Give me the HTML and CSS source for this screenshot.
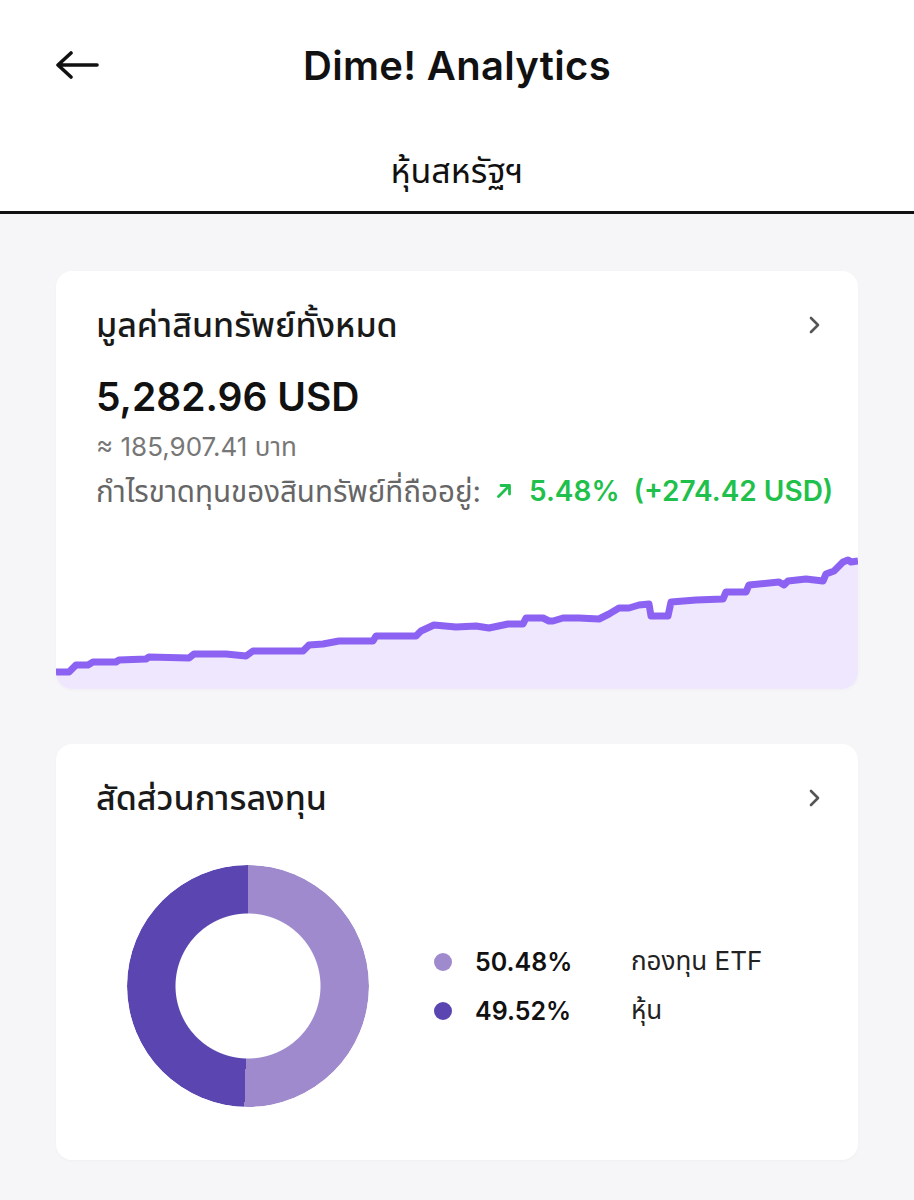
FILE: index.html
```html
<!DOCTYPE html>
<html lang="th">

<head>
    <meta charset="UTF-8">
    <meta name="viewport" content="width=device-width, initial-scale=1.0">
    <title>Dime! Analytics</title>
    <link rel="stylesheet" href="styles.css">
</head>

<body>
    <header class="topBar">
        <div class="titleRow">
            <a class="backBtn" href="#">
                <svg width="44" height="28" viewBox="0 0 44 28">
                    <path d="M42 14H4M16 2L3 14l13 12" fill="none" stroke="#111" stroke-width="3.6" stroke-linecap="round" stroke-linejoin="round"/>
                </svg>
            </a>
            <h1 class="pageTitle">Dime! Analytics</h1>
        </div>
        <div class="tabRow">
            <span class="tab">หุ้นสหรัฐฯ</span>
        </div>
    </header>

    <main class="content">
        <!-- Total asset value -->
        <section class="card">
            <div class="cardHead">
                <h2 class="cardTitle">มูลค่าสินทรัพย์ทั้งหมด</h2>
                <svg class="chevron" width="14" height="20" viewBox="0 0 14 20">
                    <path d="M3 3l7 7-7 7" fill="none" stroke="#555" stroke-width="2.6" stroke-linecap="round" stroke-linejoin="round"/>
                </svg>
            </div>
            <div class="amount">5,282.96 USD</div>
            <div class="subAmount">≈ 185,907.41 บาท</div>
            <div class="profit">
                <span class="profitLabel">กำไรขาดทุนของสินทรัพย์ที่ถืออยู่:</span>
                <span class="profitValue">
                    <svg class="upArrow" width="16" height="16" viewBox="0 0 16 16">
                        <path d="M2.5 13.5L13 3M5 2.5h8.5V11" fill="none" stroke="#1fc04b" stroke-width="2.8" stroke-linecap="round" stroke-linejoin="round"/>
                    </svg>
                    <span>5.48%</span>
                    <span>(+274.42 USD)</span>
                </span>
            </div>
            <svg class="chart" viewBox="0 0 802 150" preserveAspectRatio="none">
                <path d="M0 133 L13 133 L20 126 L32 126 L37 123 L60 123 L63 121 L90 120 L93 118 L133 119 L138 115 L170 115 L190 117 L197 112 L247 112 L253 106 L267 105 L283 102 L317 102 L320 97 L360 97 L365 92 L378 86 L400 88 L420 87 L433 89 L452 85 L467 85 L470 79 L487 79 L493 82 L497 82 L507 79 L523 79 L543 80 L553 75 L563 69 L573 69 L583 66 L593 65 L595 77 L612 77 L615 63 L640 61 L667 60 L670 53 L690 53 L693 46 L723 43 L728 46 L732 42 L750 40 L767 42 L770 35 L778 32 L787 23 L792 21 L795 23 L802 22 L802 150 L0 150 Z" fill="#efe7fd"/>
                <path d="M0 133 L13 133 L20 126 L32 126 L37 123 L60 123 L63 121 L90 120 L93 118 L133 119 L138 115 L170 115 L190 117 L197 112 L247 112 L253 106 L267 105 L283 102 L317 102 L320 97 L360 97 L365 92 L378 86 L400 88 L420 87 L433 89 L452 85 L467 85 L470 79 L487 79 L493 82 L497 82 L507 79 L523 79 L543 80 L553 75 L563 69 L573 69 L583 66 L593 65 L595 77 L612 77 L615 63 L640 61 L667 60 L670 53 L690 53 L693 46 L723 43 L728 46 L732 42 L750 40 L767 42 L770 35 L778 32 L787 23 L792 21 L795 23 L802 22" fill="none" stroke="#8b62f2" stroke-width="7" stroke-linejoin="round"/>
            </svg>
        </section>

        <!-- Allocation -->
        <section class="card allocCard">
            <div class="cardHead">
                <h2 class="cardTitle">สัดส่วนการลงทุน</h2>
                <svg class="chevron" width="14" height="20" viewBox="0 0 14 20">
                    <path d="M3 3l7 7-7 7" fill="none" stroke="#555" stroke-width="2.6" stroke-linecap="round" stroke-linejoin="round"/>
                </svg>
            </div>
            <div class="allocBody">
                <div class="donut"></div>
                <ul class="legend">
                    <li class="legendRow">
                        <span class="dot etf"></span>
                        <span class="pct">50.48%</span>
                        <span class="legendName">กองทุน ETF</span>
                    </li>
                    <li class="legendRow">
                        <span class="dot stock"></span>
                        <span class="pct">49.52%</span>
                        <span class="legendName">หุ้น</span>
                    </li>
                </ul>
            </div>
        </section>
    </main>
</body>

</html>
```

FILE: styles.css
```css
body {
    margin: 0;
    background-color: #f6f6f8;
    font-family: Inter, "Noto Sans", "Noto Sans Thai", sans-serif;
    color: #1a1a1a;
}

.topBar {
    background-color: #fff;
    border-bottom: 3px solid #111;
}

.titleRow {
    position: relative;
    height: 130px;
    display: flex;
    align-items: center;
    justify-content: center;
}

.backBtn {
    position: absolute;
    left: 55px;
    top: 51px;
    display: flex;
}

.pageTitle {
    margin: 0;
    font-family: Inter, sans-serif;
    font-size: 40px;
    font-weight: 600;
    letter-spacing: 0.3px;
    color: #111;
}

.tabRow {
    height: 81px;
    display: flex;
    justify-content: center;
    align-items: center;
}

.tab {
    font-size: 34px;
    line-height: 40px;
    color: #111;
}

.content {
    padding: 57px 56px 40px;
    display: flex;
    flex-direction: column;
    gap: 55px;
}

.card {
    background-color: #fff;
    border-radius: 16px;
    overflow: hidden;
    box-shadow: 0 1px 3px rgba(0, 0, 0, 0.03);
}

.cardHead {
    display: flex;
    align-items: center;
    justify-content: space-between;
    padding: 36px 36px 0 40px;
}

.cardTitle {
    margin: 0;
    font-size: 34px;
    line-height: 36px;
    font-weight: 500;
    color: #1a1a1a;
}

.chevron {
    display: block;
}

.amount {
    margin-top: 30px;
    padding-left: 40px;
    font-size: 39px;
    line-height: 48px;
    font-weight: 600;
    color: #111;
}

.subAmount {
    margin-top: 4px;
    padding-left: 40px;
    font-size: 26px;
    line-height: 44px;
    color: #777;
}

.profit {
    padding-left: 40px;
    font-size: 28px;
    line-height: 44px;
    display: flex;
    gap: 15px;
}

.profitLabel {
    font-size: 29.5px;
    color: #666;
}

.profitValue {
    color: #1fc04b;
    font-weight: 600;
    display: flex;
    align-items: center;
    gap: 14px;
}

.upArrow {
    margin-right: 3px;
}

.chart {
    display: block;
    width: 100%;
    height: 150px;
    margin-top: 26px;
}

.allocBody {
    display: flex;
    align-items: center;
    padding: 49px 0 53px 71px;
}

.donut {
    width: 242px;
    height: 242px;
    border-radius: 50%;
    background: conic-gradient(#9e8acc 0 50.48%, #5a45b1 50.48% 100%);
    -webkit-mask: radial-gradient(circle, transparent 72px, #000 73px);
    mask: radial-gradient(circle, transparent 72px, #000 73px);
}

.legend {
    list-style: none;
    margin: 0 0 0 65px;
    padding: 0;
}

.legendRow {
    display: flex;
    align-items: center;
    height: 49px;
    font-size: 25px;
}

.dot {
    width: 18px;
    height: 18px;
    border-radius: 50%;
    margin-right: 23px;
}

.dot.etf {
    background-color: #9e8acc;
}

.dot.stock {
    background-color: #5a45b1;
}

.pct {
    width: 156px;
    font-weight: 600;
    color: #111;
}

.legendName {
    font-size: 26px;
    color: #222;
}
```
